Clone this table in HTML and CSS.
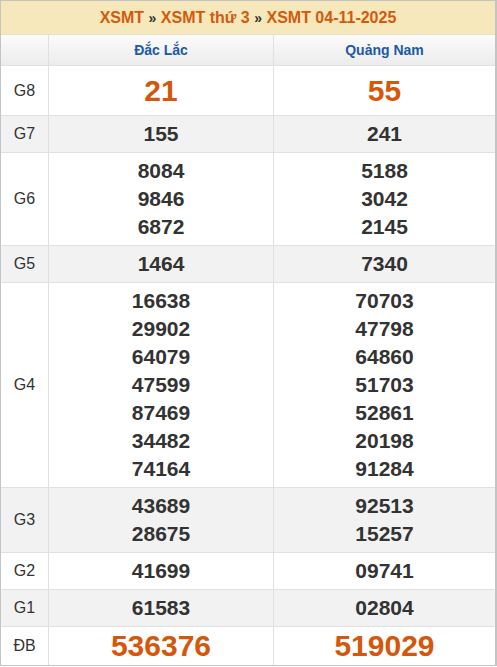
FILE: index.html
```html
<!DOCTYPE html>
<html lang="vi">
<head>
<meta charset="utf-8">
<title>XSMT 04-11-2025</title>
<link rel="stylesheet" href="styles.css">
</head>
<body>
<div class="board">
  <div class="title">
    <a class="crumb">XSMT</a> <span class="sep">»</span> <a class="crumb">XSMT thứ 3</a> <span class="sep">»</span> <a class="crumb">XSMT 04-11-2025</a>
  </div>
  <div class="row head">
    <div class="lab"></div>
    <div class="cell city">Đắc Lắc</div>
    <div class="cell city last">Quảng Nam</div>
  </div>
  <div class="row g8">
    <div class="lab">G8</div>
    <div class="cell big">21</div>
    <div class="cell big last">55</div>
  </div>
  <div class="row alt">
    <div class="lab">G7</div>
    <div class="cell">155</div>
    <div class="cell last">241</div>
  </div>
  <div class="row">
    <div class="lab">G6</div>
    <div class="cell"><div>8084</div><div>9846</div><div>6872</div></div>
    <div class="cell last"><div>5188</div><div>3042</div><div>2145</div></div>
  </div>
  <div class="row alt">
    <div class="lab">G5</div>
    <div class="cell">1464</div>
    <div class="cell last">7340</div>
  </div>
  <div class="row">
    <div class="lab">G4</div>
    <div class="cell"><div>16638</div><div>29902</div><div>64079</div><div>47599</div><div>87469</div><div>34482</div><div>74164</div></div>
    <div class="cell last"><div>70703</div><div>47798</div><div>64860</div><div>51703</div><div>52861</div><div>20198</div><div>91284</div></div>
  </div>
  <div class="row alt">
    <div class="lab">G3</div>
    <div class="cell"><div>43689</div><div>28675</div></div>
    <div class="cell last"><div>92513</div><div>15257</div></div>
  </div>
  <div class="row">
    <div class="lab">G2</div>
    <div class="cell">41699</div>
    <div class="cell last">09741</div>
  </div>
  <div class="row alt">
    <div class="lab">G1</div>
    <div class="cell">61583</div>
    <div class="cell last">02804</div>
  </div>
  <div class="row db">
    <div class="lab">ĐB</div>
    <div class="cell big">536376</div>
    <div class="cell big last">519029</div>
  </div>
</div>
</body>
</html>
```

FILE: styles.css
```css
html, body {
  margin: 0;
  padding: 0;
  background: #ffffff;
}
body {
  font-family: "Liberation Sans", Arial, sans-serif;
  color: #333333;
}
.board {
  width: 497px;
  box-sizing: border-box;
  border-top: 1px solid #c4c4c4;
  border-left: 1px solid #c4c4c4;
  border-right: 2px solid #c4c4c4;
  border-bottom: 1px solid #c4c4c4;
}
.title {
  height: 33px;
  line-height: 33px;
  background: #f6e8ba;
  border-bottom: 1px solid #e6e0cc;
  text-align: center;
  font-size: 16px;
  font-weight: bold;
  color: #d35a0d;
}
.crumb {
  color: #d35a0d;
  text-decoration: none;
}
.sep {
  color: #333333;
  font-size: 14px;
}
.row {
  display: flex;
  border-bottom: 1px solid #e0e0e0;
  background: #ffffff;
}
.row.alt {
  background: #f2f2f2;
}
.row:last-child {
  border-bottom: none;
}
.lab {
  width: 47px;
  flex: none;
  border-right: 1px solid #e0e0e0;
  display: flex;
  align-items: center;
  justify-content: center;
  font-size: 16px;
  color: #333333;
}
.cell {
  width: 224px;
  flex: none;
  border-right: 1px solid #e0e0e0;
  display: flex;
  flex-direction: column;
  align-items: center;
  justify-content: center;
  padding: 4px 0;
  line-height: 28px;
  font-size: 21px;
  font-weight: bold;
  color: #333333;
}
.cell.last {
  flex: 1;
  width: auto;
  border-right: none;
}
.head {
  background: linear-gradient(#fbfbfb, #ececec);
}
.head .cell {
  padding: 0;
  height: 30px;
  line-height: 30px;
  font-size: 14px;
  color: #1c5aa3;
}
.head .lab {
  height: 30px;
}
.big {
  font-size: 30px;
  color: #d4570a;
}
.g8 .cell {
  height: 49px;
  padding: 0;
  line-height: 49px;
}
.db .cell {
  height: 38px;
  padding: 0;
  line-height: 38px;
}
.db .lab {
  height: 38px;
}
```
